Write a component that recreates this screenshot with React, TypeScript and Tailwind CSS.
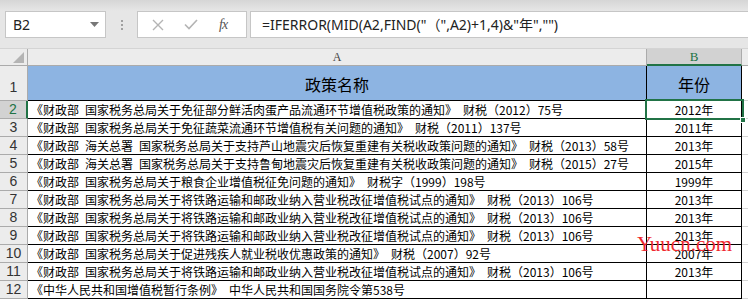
import React from "react";

const rows: { n: number; a: string; b: string }[] = [
  { n: 2, a: "《财政部 国家税务总局关于免征部分鲜活肉蛋产品流通环节增值税政策的通知》 财税（2012）75号", b: "2012年" },
  { n: 3, a: "《财政部 国家税务总局关于免征蔬菜流通环节增值税有关问题的通知》 财税（2011）137号", b: "2011年" },
  { n: 4, a: "《财政部 海关总署 国家税务总局关于支持芦山地震灾后恢复重建有关税收政策问题的通知》 财税（2013）58号", b: "2013年" },
  { n: 5, a: "《财政部 海关总署 国家税务总局关于支持鲁甸地震灾后恢复重建有关税收政策问题的通知》 财税（2015）27号", b: "2015年" },
  { n: 6, a: "《财政部 国家税务总局关于粮食企业增值税征免问题的通知》 财税字（1999）198号", b: "1999年" },
  { n: 7, a: "《财政部 国家税务总局关于将铁路运输和邮政业纳入营业税改征增值税试点的通知》 财税（2013）106号", b: "2013年" },
  { n: 8, a: "《财政部 国家税务总局关于将铁路运输和邮政业纳入营业税改征增值税试点的通知》 财税（2013）106号", b: "2013年" },
  { n: 9, a: "《财政部 国家税务总局关于将铁路运输和邮政业纳入营业税改征增值税试点的通知》 财税（2013）106号", b: "2013年" },
  { n: 10, a: "《财政部 国家税务总局关于促进残疾人就业税收优惠政策的通知》 财税（2007）92号", b: "2007年" },
  { n: 11, a: "《财政部 国家税务总局关于将铁路运输和邮政业纳入营业税改征增值税试点的通知》 财税（2013）106号", b: "2013年" },
  { n: 12, a: "《中华人民共和国增值税暂行条例》 中华人民共和国国务院令第538号", b: "" },
];

const cellFont = { fontFamily: '"Noto Sans CJK SC", "Noto Sans", sans-serif' };

export default function App() {
  return (
    <div className="relative w-[748px] h-[300px] overflow-hidden bg-white">
      {/* Toolbar */}
      <div className="h-[48px] bg-[#e6e6e6] flex flex-col">
        <div className="h-[11px] bg-gradient-to-b from-[#d6d6d6] to-[#e6e6e6]" />
        <div className="h-[27px] flex items-stretch">
          <div className="ml-[5px] w-[101px] bg-white border border-[#c6c6c6] flex items-center justify-between pl-[7px] pr-[6px]">
            <span className="text-[14px] text-[#222]" style={{ fontFamily: '"Noto Sans", sans-serif' }}>B2</span>
            <svg width="9" height="5" viewBox="0 0 9 5"><path d="M0 0 L9 0 L4.5 5 Z" fill="#777" /></svg>
          </div>
          <div className="w-[31px] flex flex-col items-center justify-center gap-[2px]">
            <div className="w-[2px] h-[2px] bg-[#a0a0a0]" />
            <div className="w-[2px] h-[2px] bg-[#a0a0a0]" />
            <div className="w-[2px] h-[2px] bg-[#a0a0a0]" />
          </div>
          <div className="w-[110px] bg-white border border-[#c6c6c6] flex items-center">
            <svg className="ml-[14px]" width="12" height="12" viewBox="0 0 12 12"><path d="M1 1 L11 11 M11 1 L1 11" stroke="#b4b4b4" strokeWidth="1.4" fill="none" /></svg>
            <svg className="ml-[20px]" width="14" height="11" viewBox="0 0 14 11"><path d="M1 5.5 L5 9.5 L13 1" stroke="#b4b4b4" strokeWidth="1.6" fill="none" /></svg>
            <span className="ml-[21px] italic text-[14px] text-[#555] tracking-[-1px]" style={{ fontFamily: '"Liberation Serif", serif' }}>fx</span>
          </div>
          <div className="ml-[3px] flex-1 bg-white border-y border-l border-[#c6c6c6] flex items-center pl-[11px]">
            <span className="text-[14px] text-[#222] whitespace-pre" style={{ fontFamily: '"Noto Sans", "Noto Sans CJK SC", sans-serif' }}>=IFERROR(MID(A2,FIND("（",A2)+1,4)&amp;"年","")</span>
          </div>
        </div>
        <div className="flex-1" />
      </div>

      {/* Column headers */}
      <div className="h-[18px] flex bg-[#ececec] border-t border-[#d4d4d4]">
        <div className="w-[28px] border-r border-b border-[#ababab] flex items-end justify-end pr-[3px] pb-[2px]">
          <svg width="11" height="11" viewBox="0 0 11 11"><path d="M11 0 L11 11 L0 11 Z" fill="#b4b4b4" /></svg>
        </div>
        <div className="w-[619px] border-r border-b border-[#ababab] flex items-center justify-center text-[12px] text-[#444]" style={{ fontFamily: '"Liberation Serif", serif' }}>A</div>
        <div className="w-[95px] bg-[#d2d2d2] border-r border-[#ababab] border-b-2 border-b-[#217346] flex items-center justify-center text-[13px] text-[#217346]" style={{ fontFamily: '"Liberation Serif", serif' }}>B</div>
        <div className="flex-1 border-b border-[#ababab]" />
      </div>

      {/* Row 1 */}
      <div className="h-[35px] flex">
        <div className="w-[28px] bg-[#ececec] border-r border-b border-[#ababab] flex items-end justify-center pb-[2px] text-[14px] text-[#333]" style={{ fontFamily: '"Liberation Sans", sans-serif' }}>1</div>
        <div className="w-[619px] bg-[#8db4e2] border-r border-b border-black flex items-end justify-center pb-[7px] text-[16px] text-black leading-[18px]" style={cellFont}>政策名称</div>
        <div className="w-[95px] bg-[#8db4e2] border-r border-b border-black flex items-end justify-center pb-[7px] text-[16px] text-black leading-[18px]" style={cellFont}>年份</div>
        <div className="flex-1 border-b border-[#d4d4d4]" />
      </div>

      {rows.map((r) => {
        const sel = r.n === 2;
        return (
          <div key={r.n} className="h-[18px] flex">
            <div
              className={
                sel
                  ? "w-[28px] bg-[#d2d2d2] border-r-2 border-r-[#217346] border-b border-b-[#ababab] flex items-center justify-center text-[14px] text-[#217346]"
                  : "w-[28px] bg-[#ececec] border-r border-b border-[#ababab] flex items-center justify-center text-[14px] text-[#333]"
              }
              style={{ fontFamily: '"Liberation Sans", sans-serif' }}
            >
              {r.n}
            </div>
            <div className="w-[619px] border-r border-b border-black flex items-center pl-[3px] text-[12px] text-black whitespace-pre overflow-hidden leading-[17px]" style={cellFont}>{r.a.replace(/ /g, "\u2002")}</div>
            <div className="w-[95px] border-r border-b border-black flex items-center justify-center text-[12px] text-black leading-[17px]" style={cellFont}>{r.b}</div>
            <div className="flex-1 border-b border-[#d4d4d4]" />
          </div>
        );
      })}

      {/* Selection of B2 */}
      <div className="absolute left-[645px] top-[99px] w-[99px] h-[21px] border-2 border-[#217346] pointer-events-none" />
      <div className="absolute left-[740px] top-[117px] w-[6px] h-[6px] bg-[#217346] border border-white" />

      {/* Watermark */}
      <div className="absolute left-[637px] top-[232px] text-[21px] leading-[24px] whitespace-nowrap text-[#f0282f] pointer-events-none" style={{ fontFamily: '"Liberation Serif", serif' }}>Yuucn.com</div>
    </div>
  );
}
